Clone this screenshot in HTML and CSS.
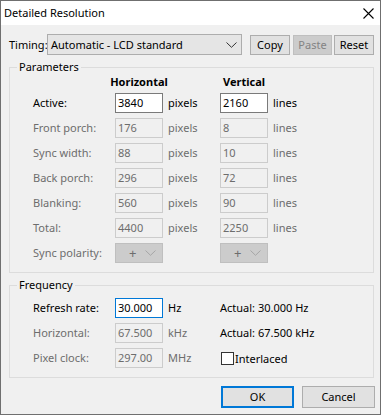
FILE: index.html
```html
<!DOCTYPE html>
<html>
<head>
<meta charset="utf-8">
<title>Detailed Resolution</title>
<link rel="stylesheet" href="styles.css">
</head>
<body>
<div class="window">
  <div class="titlebar">
    <span class="title">Detailed Resolution</span>
    <svg class="close" width="11" height="11" viewBox="0 0 11 11"><path d="M0.5 0.5L10.5 10.5M10.5 0.5L0.5 10.5" stroke="#000" stroke-width="1.1" fill="none"/></svg>
  </div>
  <div class="content">
    <div class="timing">
      <span class="timing-lbl">Timing:</span>
      <div class="combo">
        <span>Automatic - LCD standard</span>
        <svg class="chev" width="11" height="6" viewBox="0 0 11 6"><path d="M0.5 0.5L5.5 5.3L10.5 0.5" stroke="#333" stroke-width="1" fill="none"/></svg>
      </div>
      <button class="btn w40">Copy</button>
      <button class="btn w39 dis gap3">Paste</button>
      <button class="btn w40 gap2">Reset</button>
    </div>

    <fieldset class="group">
      <legend>Parameters</legend>
      <div class="grid params">
        <span></span><span class="hdr">Horizontal</span><span></span><span class="hdr">Vertical</span><span></span>

        <span class="lbl">Active:</span><div class="edit on">3840</div><span class="unit">pixels</span><div class="edit on">2160</div><span class="unit">lines</span>
        <span class="lbl off">Front porch:</span><div class="edit">176</div><span class="unit off">pixels</span><div class="edit">8</div><span class="unit off">lines</span>
        <span class="lbl off">Sync width:</span><div class="edit">88</div><span class="unit off">pixels</span><div class="edit">10</div><span class="unit off">lines</span>
        <span class="lbl off">Back porch:</span><div class="edit">296</div><span class="unit off">pixels</span><div class="edit">72</div><span class="unit off">lines</span>
        <span class="lbl off">Blanking:</span><div class="edit">560</div><span class="unit off">pixels</span><div class="edit">90</div><span class="unit off">lines</span>
        <span class="lbl off">Total:</span><div class="edit">4400</div><span class="unit off">pixels</span><div class="edit">2250</div><span class="unit off">lines</span>
        <span class="lbl off">Sync polarity:</span>
        <div class="pol"><span class="plus">+</span><svg class="chev" width="11" height="6" viewBox="0 0 11 6"><path d="M0.5 0.5L5.5 5.3L10.5 0.5" stroke="#a6a6a6" stroke-width="1" fill="none"/></svg></div>
        <span></span>
        <div class="pol"><span class="plus">+</span><svg class="chev" width="11" height="6" viewBox="0 0 11 6"><path d="M0.5 0.5L5.5 5.3L10.5 0.5" stroke="#a6a6a6" stroke-width="1" fill="none"/></svg></div>
        <span></span>
      </div>
    </fieldset>

    <fieldset class="group">
      <legend>Frequency</legend>
      <div class="grid freq">
        <span class="lbl">Refresh rate:</span><div class="edit focus">30.000</div><span class="unit">Hz</span><span class="actual">Actual: 30.000 Hz</span>
        <span class="lbl off">Horizontal:</span><div class="edit">67.500</div><span class="unit off">kHz</span><span class="actual">Actual: 67.500 kHz</span>
        <span class="lbl off">Pixel clock:</span><div class="edit">297.00</div><span class="unit off">MHz</span>
        <label class="check"><span class="box"></span><span>Interlaced</span></label>
      </div>
    </fieldset>

    <div class="actions">
      <button class="btn dlg default">OK</button>
      <button class="btn dlg">Cancel</button>
    </div>
  </div>
</div>
</body>
</html>
```

FILE: styles.css
```css
html, body {
  margin: 0;
  padding: 0;
  background: #ffffff;
}

body {
  font-family: "Noto Sans", "Open Sans", sans-serif;
  font-size: 11px;
  color: #000;
}

.window {
  width: 381px;
  height: 415px;
  box-sizing: border-box;
  border: 1px solid #6f6f6f;
  background: #f0f0f0;
  display: flex;
  flex-direction: column;
}

.titlebar {
  height: 24px;
  flex: none;
  background: #ffffff;
  display: flex;
  align-items: center;
  justify-content: space-between;
  padding-left: 3px;
  padding-right: 6px;
}

.title {
  font-size: 11px;
  line-height: 24px;
}

.close {
  display: block;
}

.content {
  display: flex;
  flex-direction: column;
  padding: 9px 5px 0 8px;
}

.timing {
  display: flex;
  align-items: flex-start;
  height: 21px;
}

.timing-lbl {
  flex: none;
  width: 38px;
  line-height: 21px;
}

.combo {
  flex: none;
  width: 195px;
  height: 21px;
  box-sizing: border-box;
  border: 1px solid #adadad;
  background: #e5e5e5;
  display: flex;
  align-items: center;
  justify-content: space-between;
  padding: 0 4px 0 3px;
  margin-right: 8px;
}

.chev {
  display: block;
}

.btn {
  flex: none;
  font-family: inherit;
  font-size: 11px;
  color: #000;
  height: 20px;
  margin-top: 1px;
  box-sizing: border-box;
  border: 1px solid #adadad;
  background: #e1e1e1;
  padding: 0;
  line-height: 18px;
}

.w40 { width: 40px; }
.w39 { width: 39px; }
.gap3 { margin-left: 3px; }
.gap2 { margin-left: 2px; }

.btn.dis {
  background: #cccccc;
  border-color: #bfbfbf;
  color: #838383;
}

.group {
  margin: 4px 0 0 0;
  padding: 0;
  width: 365px;
  box-sizing: border-box;
  border: 1px solid #dcdcdc;
  min-width: 0;
}

.group legend {
  margin-left: 7px;
  padding: 0 2px;
  line-height: 16px;
  font-size: 11px;
}

.grid {
  display: grid;
  grid-template-columns: 82px 48px 57px 48px 1fr;
  grid-auto-rows: 20px;
  row-gap: 5px;
  padding-left: 23px;
}

.params {
  grid-template-rows: 13px;
  padding-bottom: 9px;
}

.freq {
  padding-top: 5px;
  padding-bottom: 9px;
}

.hdr {
  justify-self: center;
  font-weight: bold;
  line-height: 13px;
  white-space: nowrap;
}

.lbl {
  line-height: 20px;
  white-space: nowrap;
}

.unit {
  line-height: 20px;
  padding-left: 5px;
}

.off {
  color: #6d6d6d;
}

.edit {
  box-sizing: border-box;
  height: 20px;
  border: 1px solid #cccccc;
  background: #f0f0f0;
  color: #6d6d6d;
  line-height: 18px;
  padding-left: 2px;
}

.edit.on {
  border-color: #7a7a7a;
  background: #ffffff;
  color: #000;
}

.edit.focus {
  border-color: #0078d7;
  background: #ffffff;
  color: #000;
}

.pol {
  box-sizing: border-box;
  height: 20px;
  border: 1px solid #bfbfbf;
  background: #cccccc;
  display: flex;
  align-items: center;
  padding-left: 13px;
  gap: 9px;
}

.plus {
  color: #6d6d6d;
  font-size: 13px;
  line-height: 18px;
}

.actual {
  grid-column: 4 / span 2;
  line-height: 20px;
  white-space: nowrap;
}

.check {
  grid-column: 4 / span 2;
  display: flex;
  align-items: center;
  gap: 1px;
  padding-left: 1px;
}

.box {
  width: 13px;
  height: 13px;
  box-sizing: border-box;
  border: 1px solid #333333;
  background: #ffffff;
}

.actions {
  display: flex;
  justify-content: flex-end;
  gap: 8px;
  margin-top: 8px;
}

.btn.dlg {
  width: 73px;
  height: 22px;
  margin-top: 0;
  line-height: 20px;
}

.btn.default {
  border: 2px solid #0078d7;
  line-height: 18px;
}
```
